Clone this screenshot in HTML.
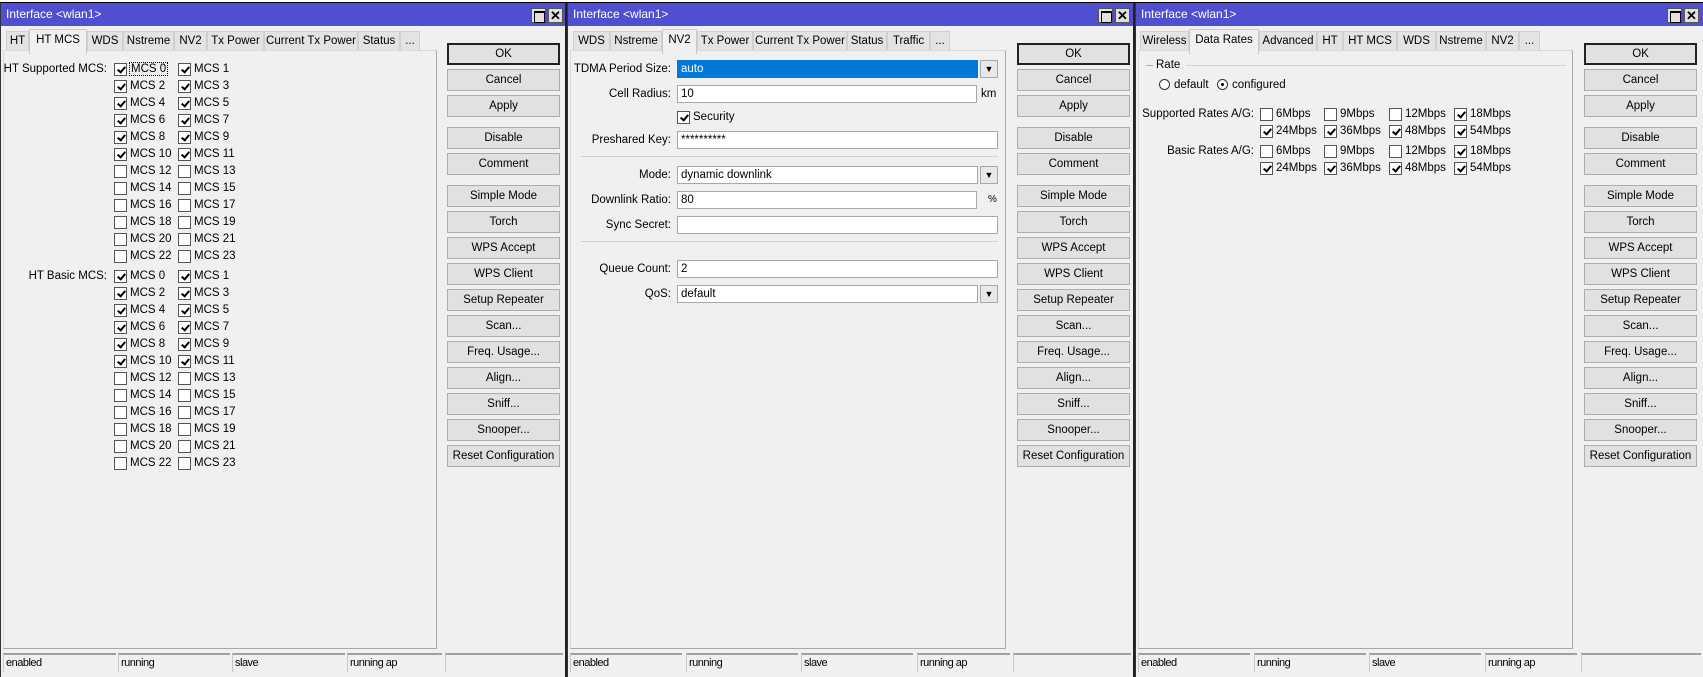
<!DOCTYPE html>
<html><head><meta charset="utf-8">
<style>
*{box-sizing:border-box}
body{margin:0;width:1703px;height:677px;position:relative;overflow:hidden;background:#fff;font-family:"Liberation Sans",sans-serif;font-size:11px;color:#000}
div,span{position:absolute}
.win{top:3px;height:674px;background:#f0f0f0;border-left:1px solid #333;border-right:2px solid #222}
.title{left:0;right:0;top:0;height:23px;background:#4f4fcf;color:#fff;font-size:12px;line-height:22px;padding-left:5px}
.tb{top:5px;width:15px;height:15px;background:#e0e0e0;border:1px solid #555}
.tb.max::after{content:"";position:absolute;left:2px;top:2px;width:9px;height:9px;border:1px solid #000;border-top-width:2px}
.tb.cls{font-size:13px;line-height:13px;text-align:center;font-weight:bold}
.tab{top:28px;height:21px;background:#e3e3e3;border:1px solid #d0d0d0;border-bottom:none;line-height:19px;text-align:center;white-space:nowrap;font-size:11.5px}
.tab.a{top:26px;height:25px;background:#f0f0f0;border-color:#c8c8c8;z-index:2;line-height:20px}
.panel{top:47px;height:599px;border:1px solid #d8d8d8;border-right-color:#a8a8a8;border-bottom-color:#a8a8a8;background:#f0f0f0}
.btn{width:113px;height:22px;background:#e1e1e1;border:1px solid #adadad;text-align:center;line-height:20px;font-size:11.5px}
.btn.ok{border:2px solid #222;line-height:18px}
.t{white-space:nowrap;line-height:14px;font-size:11.5px}
.r{text-align:right}
.cb{width:13px;height:13px;background:#fff;border:1px solid #555}
.cb.on::after{content:"";position:absolute;left:3.5px;top:1px;width:3px;height:6px;border:solid #000;border-width:0 2px 2px 0;transform:rotate(40deg)}
.sc{top:650px;height:19px;border-top:2px solid #a0a0a0;border-left:1px solid #c8c8c8;line-height:17px;font-size:11px;padding-left:2px;letter-spacing:-0.5px}
.in{height:18px;background:#fff;border:1px solid #a8a8a8;line-height:16px;padding-left:3px;font-size:11.5px}
.dd{width:18px;height:18px;background:#e8e8e8;border:1px solid #a8a8a8;font-size:9px;text-align:center;line-height:16px}
.sep{height:1px;background:#d0d0d0}
.rad{width:11px;height:11px;border:1px solid #333;border-radius:50%;background:#fff}
</style></head><body>
<div style="left:0;top:0;width:1703px;height:3px;background:#fff;border-bottom:1px solid #000"></div>

<!-- WINDOW 1 -->
<div class="win" style="left:0;width:567px">
<div class="title">Interface &lt;wlan1&gt;</div>
<div class="tb max" style="left:530px"></div><div class="tb cls" style="left:547px">✕</div>
<div class="tab" style="left:5px;width:23px">HT</div>
<div class="tab a" style="left:28px;width:58px">HT MCS</div>
<div class="tab" style="left:86px;width:36px">WDS</div>
<div class="tab" style="left:122px;width:51px">Nstreme</div>
<div class="tab" style="left:173px;width:33px">NV2</div>
<div class="tab" style="left:206px;width:57px">Tx Power</div>
<div class="tab" style="left:263px;width:94px">Current Tx Power</div>
<div class="tab" style="left:357px;width:42px">Status</div>
<div class="tab" style="left:399px;width:20px">...</div>
<div class="panel" style="left:2px;width:434px"></div>
<div class="t r" style="left:0;width:106px;top:59px">HT Supported MCS:</div>
<div class="t r" style="left:0;width:106px;top:266px">HT Basic MCS:</div>
<div class="cb on" style="left:113px;top:60px"></div><div class="t" style="left:128px;top:59px;border:1px dotted #000;padding:0 1px;line-height:12px">MCS 0</div><div class="cb on" style="left:177px;top:60px"></div><div class="t" style="left:193px;top:59px">MCS 1</div>
<div class="cb on" style="left:113px;top:77px"></div><div class="t" style="left:129px;top:76px">MCS 2</div><div class="cb on" style="left:177px;top:77px"></div><div class="t" style="left:193px;top:76px">MCS 3</div>
<div class="cb on" style="left:113px;top:94px"></div><div class="t" style="left:129px;top:93px">MCS 4</div><div class="cb on" style="left:177px;top:94px"></div><div class="t" style="left:193px;top:93px">MCS 5</div>
<div class="cb on" style="left:113px;top:111px"></div><div class="t" style="left:129px;top:110px">MCS 6</div><div class="cb on" style="left:177px;top:111px"></div><div class="t" style="left:193px;top:110px">MCS 7</div>
<div class="cb on" style="left:113px;top:128px"></div><div class="t" style="left:129px;top:127px">MCS 8</div><div class="cb on" style="left:177px;top:128px"></div><div class="t" style="left:193px;top:127px">MCS 9</div>
<div class="cb on" style="left:113px;top:145px"></div><div class="t" style="left:129px;top:144px">MCS 10</div><div class="cb on" style="left:177px;top:145px"></div><div class="t" style="left:193px;top:144px">MCS 11</div>
<div class="cb" style="left:113px;top:162px"></div><div class="t" style="left:129px;top:161px">MCS 12</div><div class="cb" style="left:177px;top:162px"></div><div class="t" style="left:193px;top:161px">MCS 13</div>
<div class="cb" style="left:113px;top:179px"></div><div class="t" style="left:129px;top:178px">MCS 14</div><div class="cb" style="left:177px;top:179px"></div><div class="t" style="left:193px;top:178px">MCS 15</div>
<div class="cb" style="left:113px;top:196px"></div><div class="t" style="left:129px;top:195px">MCS 16</div><div class="cb" style="left:177px;top:196px"></div><div class="t" style="left:193px;top:195px">MCS 17</div>
<div class="cb" style="left:113px;top:213px"></div><div class="t" style="left:129px;top:212px">MCS 18</div><div class="cb" style="left:177px;top:213px"></div><div class="t" style="left:193px;top:212px">MCS 19</div>
<div class="cb" style="left:113px;top:230px"></div><div class="t" style="left:129px;top:229px">MCS 20</div><div class="cb" style="left:177px;top:230px"></div><div class="t" style="left:193px;top:229px">MCS 21</div>
<div class="cb" style="left:113px;top:247px"></div><div class="t" style="left:129px;top:246px">MCS 22</div><div class="cb" style="left:177px;top:247px"></div><div class="t" style="left:193px;top:246px">MCS 23</div>
<div class="cb on" style="left:113px;top:267px"></div><div class="t" style="left:129px;top:266px">MCS 0</div><div class="cb on" style="left:177px;top:267px"></div><div class="t" style="left:193px;top:266px">MCS 1</div>
<div class="cb on" style="left:113px;top:284px"></div><div class="t" style="left:129px;top:283px">MCS 2</div><div class="cb on" style="left:177px;top:284px"></div><div class="t" style="left:193px;top:283px">MCS 3</div>
<div class="cb on" style="left:113px;top:301px"></div><div class="t" style="left:129px;top:300px">MCS 4</div><div class="cb on" style="left:177px;top:301px"></div><div class="t" style="left:193px;top:300px">MCS 5</div>
<div class="cb on" style="left:113px;top:318px"></div><div class="t" style="left:129px;top:317px">MCS 6</div><div class="cb on" style="left:177px;top:318px"></div><div class="t" style="left:193px;top:317px">MCS 7</div>
<div class="cb on" style="left:113px;top:335px"></div><div class="t" style="left:129px;top:334px">MCS 8</div><div class="cb on" style="left:177px;top:335px"></div><div class="t" style="left:193px;top:334px">MCS 9</div>
<div class="cb on" style="left:113px;top:352px"></div><div class="t" style="left:129px;top:351px">MCS 10</div><div class="cb on" style="left:177px;top:352px"></div><div class="t" style="left:193px;top:351px">MCS 11</div>
<div class="cb" style="left:113px;top:369px"></div><div class="t" style="left:129px;top:368px">MCS 12</div><div class="cb" style="left:177px;top:369px"></div><div class="t" style="left:193px;top:368px">MCS 13</div>
<div class="cb" style="left:113px;top:386px"></div><div class="t" style="left:129px;top:385px">MCS 14</div><div class="cb" style="left:177px;top:386px"></div><div class="t" style="left:193px;top:385px">MCS 15</div>
<div class="cb" style="left:113px;top:403px"></div><div class="t" style="left:129px;top:402px">MCS 16</div><div class="cb" style="left:177px;top:403px"></div><div class="t" style="left:193px;top:402px">MCS 17</div>
<div class="cb" style="left:113px;top:420px"></div><div class="t" style="left:129px;top:419px">MCS 18</div><div class="cb" style="left:177px;top:420px"></div><div class="t" style="left:193px;top:419px">MCS 19</div>
<div class="cb" style="left:113px;top:437px"></div><div class="t" style="left:129px;top:436px">MCS 20</div><div class="cb" style="left:177px;top:437px"></div><div class="t" style="left:193px;top:436px">MCS 21</div>
<div class="cb" style="left:113px;top:454px"></div><div class="t" style="left:129px;top:453px">MCS 22</div><div class="cb" style="left:177px;top:454px"></div><div class="t" style="left:193px;top:453px">MCS 23</div>
<div class="btn ok" style="left:446px;top:40px">OK</div>
<div class="btn" style="left:446px;top:66px">Cancel</div>
<div class="btn" style="left:446px;top:92px">Apply</div>
<div class="btn" style="left:446px;top:124px">Disable</div>
<div class="btn" style="left:446px;top:150px">Comment</div>
<div class="btn" style="left:446px;top:182px">Simple Mode</div>
<div class="btn" style="left:446px;top:208px">Torch</div>
<div class="btn" style="left:446px;top:234px">WPS Accept</div>
<div class="btn" style="left:446px;top:260px">WPS Client</div>
<div class="btn" style="left:446px;top:286px">Setup Repeater</div>
<div class="btn" style="left:446px;top:312px">Scan...</div>
<div class="btn" style="left:446px;top:338px">Freq. Usage...</div>
<div class="btn" style="left:446px;top:364px">Align...</div>
<div class="btn" style="left:446px;top:390px">Sniff...</div>
<div class="btn" style="left:446px;top:416px">Snooper...</div>
<div class="btn" style="left:446px;top:442px">Reset Configuration</div>
<div class="sc" style="left:2px;width:113px">enabled</div>
<div class="sc" style="left:117px;width:112px">running</div>
<div class="sc" style="left:231px;width:113px">slave</div>
<div class="sc" style="left:346px;width:95px">running ap</div>
<div class="sc" style="left:444px;width:118px"></div>
</div>

<!-- WINDOW 2 -->
<div class="win" style="left:567px;width:568px">
<div class="title">Interface &lt;wlan1&gt;</div>
<div class="tb max" style="left:530px"></div><div class="tb cls" style="left:547px">✕</div>
<div class="tab" style="left:5px;width:37px">WDS</div>
<div class="tab" style="left:42px;width:52px">Nstreme</div>
<div class="tab a" style="left:94px;width:35px">NV2</div>
<div class="tab" style="left:129px;width:56px">Tx Power</div>
<div class="tab" style="left:185px;width:94px">Current Tx Power</div>
<div class="tab" style="left:279px;width:40px">Status</div>
<div class="tab" style="left:319px;width:43px">Traffic</div>
<div class="tab" style="left:362px;width:20px">...</div>
<div class="panel" style="left:2px;width:436px"></div>
<div class="t r" style="left:0;width:103px;top:59px">TDMA Period Size:</div>
<div class="in" style="left:109px;top:57px;width:301px;background:#0078d7;color:#fff;border-color:#0078d7">auto</div><div class="dd" style="left:412px;top:57px">▼</div>
<div class="t r" style="left:0;width:103px;top:84px">Cell Radius:</div>
<div class="in" style="left:109px;top:82px;width:300px">10</div><div class="t" style="left:413px;top:84px">km</div>
<div class="cb on" style="left:109px;top:108px"></div><div class="t" style="left:125px;top:107px">Security</div>
<div class="t r" style="left:0;width:103px;top:130px">Preshared Key:</div>
<div class="in" style="left:109px;top:128px;width:321px">**********</div>
<div class="sep" style="left:13px;width:417px;top:153px"></div>
<div class="t r" style="left:0;width:103px;top:165px">Mode:</div>
<div class="in" style="left:109px;top:163px;width:301px">dynamic downlink</div><div class="dd" style="left:412px;top:163px">▼</div>
<div class="t r" style="left:0;width:103px;top:190px">Downlink Ratio:</div>
<div class="in" style="left:109px;top:188px;width:300px">80</div><div class="t" style="left:420px;top:190px;font-size:10px">%</div>
<div class="t r" style="left:0;width:103px;top:215px">Sync Secret:</div>
<div class="in" style="left:109px;top:213px;width:321px"></div>
<div class="sep" style="left:13px;width:417px;top:238px"></div>
<div class="t r" style="left:0;width:103px;top:259px">Queue Count:</div>
<div class="in" style="left:109px;top:257px;width:321px">2</div>
<div class="t r" style="left:0;width:103px;top:284px">QoS:</div>
<div class="in" style="left:109px;top:282px;width:301px">default</div><div class="dd" style="left:412px;top:282px">▼</div>
<div class="btn ok" style="left:449px;top:40px">OK</div>
<div class="btn" style="left:449px;top:66px">Cancel</div>
<div class="btn" style="left:449px;top:92px">Apply</div>
<div class="btn" style="left:449px;top:124px">Disable</div>
<div class="btn" style="left:449px;top:150px">Comment</div>
<div class="btn" style="left:449px;top:182px">Simple Mode</div>
<div class="btn" style="left:449px;top:208px">Torch</div>
<div class="btn" style="left:449px;top:234px">WPS Accept</div>
<div class="btn" style="left:449px;top:260px">WPS Client</div>
<div class="btn" style="left:449px;top:286px">Setup Repeater</div>
<div class="btn" style="left:449px;top:312px">Scan...</div>
<div class="btn" style="left:449px;top:338px">Freq. Usage...</div>
<div class="btn" style="left:449px;top:364px">Align...</div>
<div class="btn" style="left:449px;top:390px">Sniff...</div>
<div class="btn" style="left:449px;top:416px">Snooper...</div>
<div class="btn" style="left:449px;top:442px">Reset Configuration</div>
<div class="sc" style="left:2px;width:112px">enabled</div>
<div class="sc" style="left:118px;width:112px">running</div>
<div class="sc" style="left:233px;width:112px">slave</div>
<div class="sc" style="left:349px;width:93px">running ap</div>
<div class="sc" style="left:445px;width:118px"></div>
</div>

<!-- WINDOW 3 -->
<div class="win" style="left:1135px;width:568px;border-right:none">
<div class="title">Interface &lt;wlan1&gt;</div>
<div class="tb max" style="left:531px"></div><div class="tb cls" style="left:548px">✕</div>
<div class="tab" style="left:4px;width:49px">Wireless</div>
<div class="tab a" style="left:53px;width:70px">Data Rates</div>
<div class="tab" style="left:123px;width:58px">Advanced</div>
<div class="tab" style="left:181px;width:26px">HT</div>
<div class="tab" style="left:207px;width:54px">HT MCS</div>
<div class="tab" style="left:261px;width:39px">WDS</div>
<div class="tab" style="left:300px;width:50px">Nstreme</div>
<div class="tab" style="left:350px;width:33px">NV2</div>
<div class="tab" style="left:383px;width:21px">...</div>
<div class="panel" style="left:2px;width:435px"></div>
<div class="sep" style="left:10px;width:7px;top:62px;background:#b0b0b0"></div>
<div class="t" style="left:20px;top:55px">Rate</div>
<div class="sep" style="left:50px;width:380px;top:62px;background:#d0d0d0"></div>
<div class="rad" style="left:23px;top:76px"></div><div class="t" style="left:38px;top:75px">default</div>
<div class="rad" style="left:81px;top:76px"><span style="left:3px;top:3px;width:3px;height:3px;background:#000;border-radius:50%"></span></div><div class="t" style="left:96px;top:75px">configured</div>
<div class="t r" style="left:0;width:118px;top:104px">Supported Rates A/G:</div>
<div class="t r" style="left:0;width:118px;top:141px">Basic Rates A/G:</div>
<div class="cb" style="left:124px;top:105px"></div><div class="t" style="left:140px;top:104px">6Mbps</div>
<div class="cb" style="left:188px;top:105px"></div><div class="t" style="left:204px;top:104px">9Mbps</div>
<div class="cb" style="left:253px;top:105px"></div><div class="t" style="left:269px;top:104px">12Mbps</div>
<div class="cb on" style="left:318px;top:105px"></div><div class="t" style="left:334px;top:104px">18Mbps</div>
<div class="cb on" style="left:124px;top:122px"></div><div class="t" style="left:140px;top:121px">24Mbps</div>
<div class="cb on" style="left:188px;top:122px"></div><div class="t" style="left:204px;top:121px">36Mbps</div>
<div class="cb on" style="left:253px;top:122px"></div><div class="t" style="left:269px;top:121px">48Mbps</div>
<div class="cb on" style="left:318px;top:122px"></div><div class="t" style="left:334px;top:121px">54Mbps</div>
<div class="cb" style="left:124px;top:142px"></div><div class="t" style="left:140px;top:141px">6Mbps</div>
<div class="cb" style="left:188px;top:142px"></div><div class="t" style="left:204px;top:141px">9Mbps</div>
<div class="cb" style="left:253px;top:142px"></div><div class="t" style="left:269px;top:141px">12Mbps</div>
<div class="cb on" style="left:318px;top:142px"></div><div class="t" style="left:334px;top:141px">18Mbps</div>
<div class="cb on" style="left:124px;top:159px"></div><div class="t" style="left:140px;top:158px">24Mbps</div>
<div class="cb on" style="left:188px;top:159px"></div><div class="t" style="left:204px;top:158px">36Mbps</div>
<div class="cb on" style="left:253px;top:159px"></div><div class="t" style="left:269px;top:158px">48Mbps</div>
<div class="cb on" style="left:318px;top:159px"></div><div class="t" style="left:334px;top:158px">54Mbps</div>
<div class="btn ok" style="left:448px;top:40px">OK</div>
<div class="btn" style="left:448px;top:66px">Cancel</div>
<div class="btn" style="left:448px;top:92px">Apply</div>
<div class="btn" style="left:448px;top:124px">Disable</div>
<div class="btn" style="left:448px;top:150px">Comment</div>
<div class="btn" style="left:448px;top:182px">Simple Mode</div>
<div class="btn" style="left:448px;top:208px">Torch</div>
<div class="btn" style="left:448px;top:234px">WPS Accept</div>
<div class="btn" style="left:448px;top:260px">WPS Client</div>
<div class="btn" style="left:448px;top:286px">Setup Repeater</div>
<div class="btn" style="left:448px;top:312px">Scan...</div>
<div class="btn" style="left:448px;top:338px">Freq. Usage...</div>
<div class="btn" style="left:448px;top:364px">Align...</div>
<div class="btn" style="left:448px;top:390px">Sniff...</div>
<div class="btn" style="left:448px;top:416px">Snooper...</div>
<div class="btn" style="left:448px;top:442px">Reset Configuration</div>
<div class="sc" style="left:2px;width:112px">enabled</div>
<div class="sc" style="left:118px;width:112px">running</div>
<div class="sc" style="left:233px;width:112px">slave</div>
<div class="sc" style="left:349px;width:92px">running ap</div>
<div class="sc" style="left:445px;width:120px"></div>
</div>
</body></html>
